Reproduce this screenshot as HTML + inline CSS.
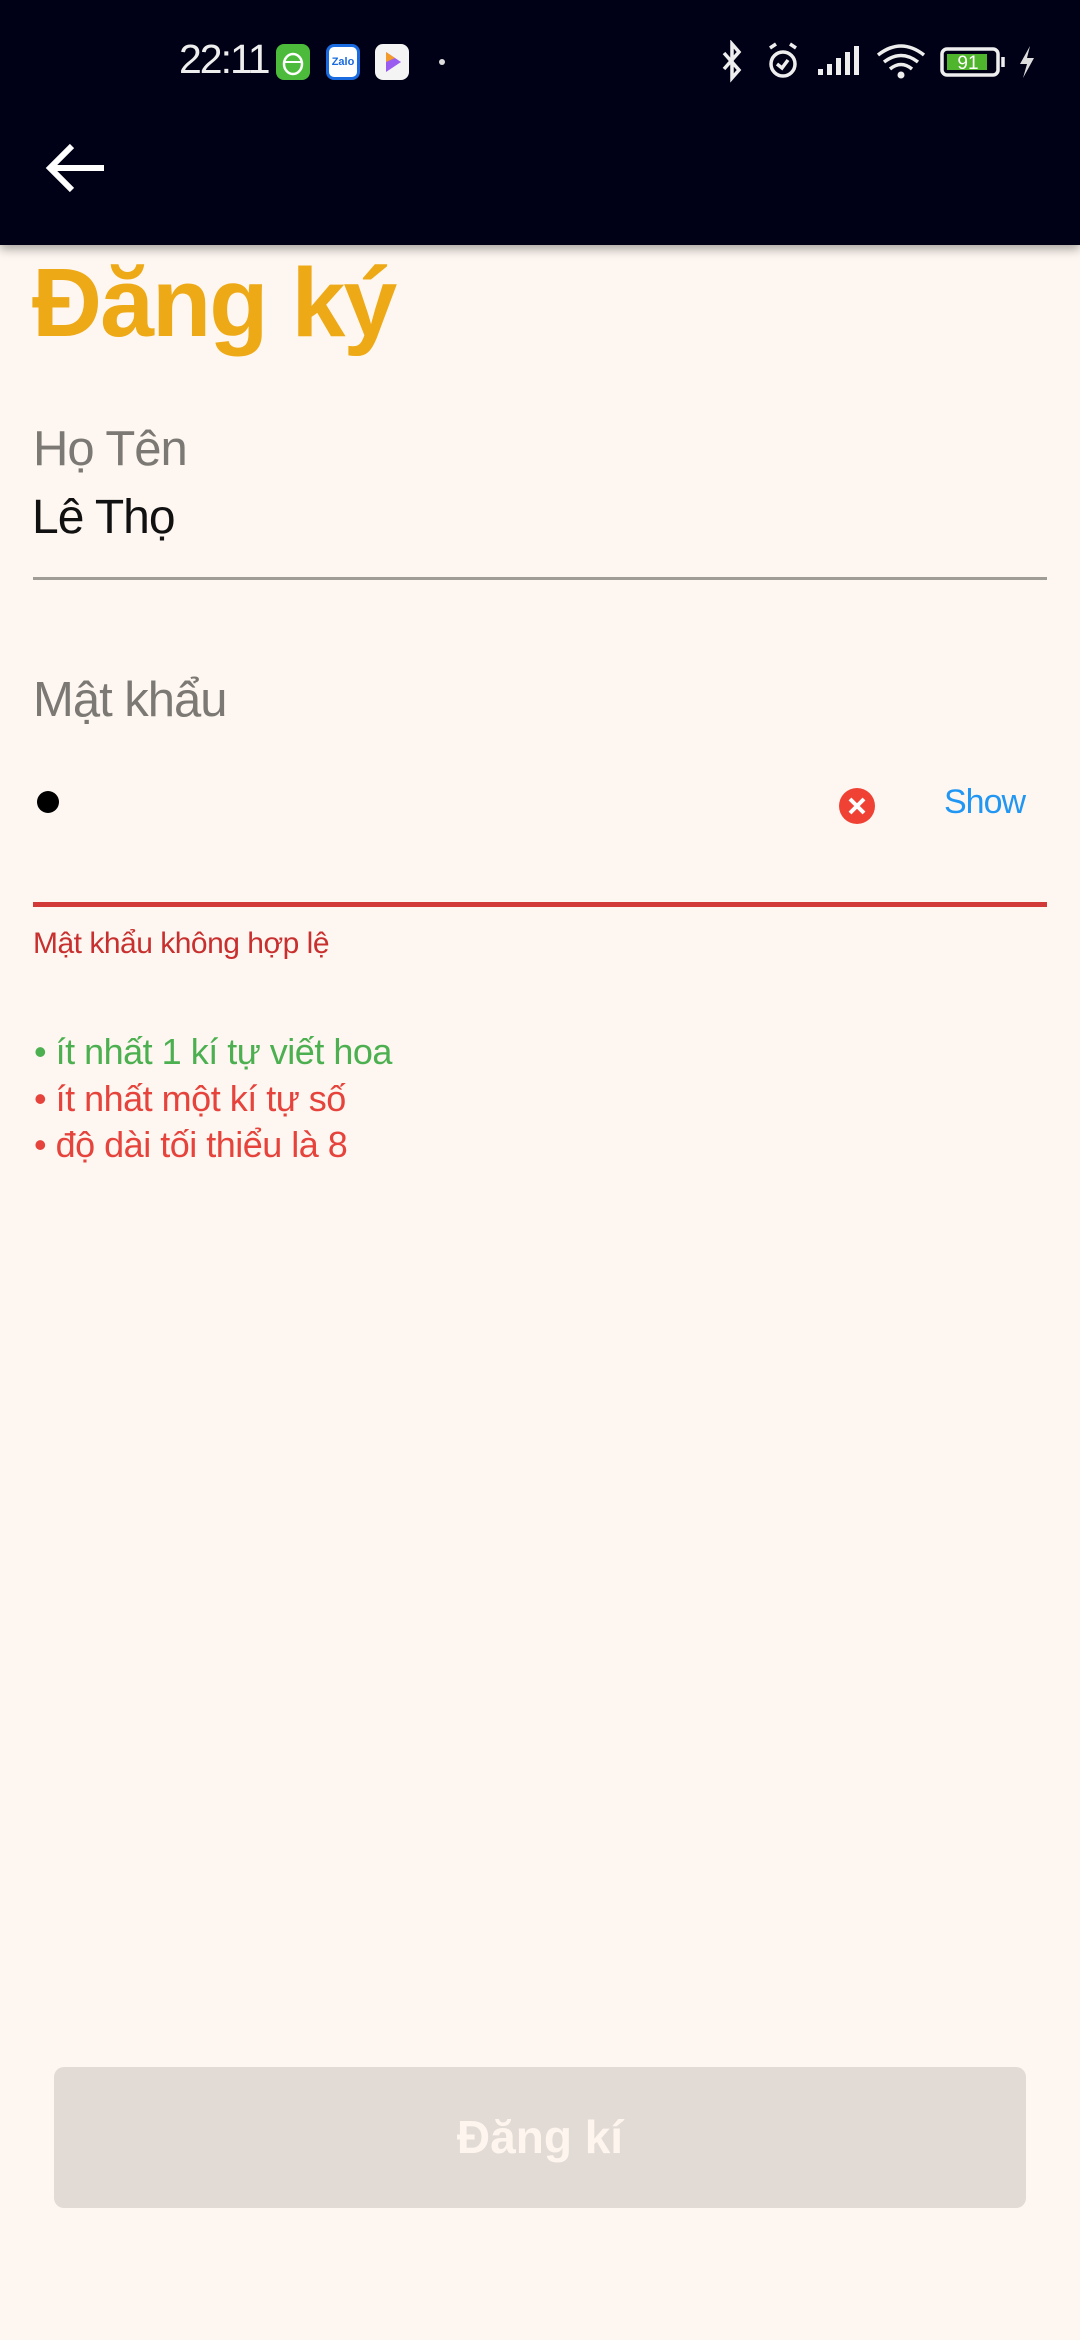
<!DOCTYPE html>
<html><head><meta charset="utf-8">
<style>
*{margin:0;padding:0;box-sizing:border-box}
body{width:1080px;height:2340px;background:#fef7f1;font-family:"Liberation Sans",sans-serif;position:relative;overflow:hidden}
.hdr{position:absolute;left:0;top:0;width:1080px;height:245px;background:#000016;box-shadow:0 4px 10px rgba(0,0,0,0.35)}
.abs{position:absolute;white-space:nowrap}
</style></head><body>
<div class="hdr"></div>
<div class="abs" style="left:179px;top:36px;font-size:41px;color:#eee;letter-spacing:-2px">22:11</div>
<div class="abs" style="left:276px;top:44px;width:34px;height:36px;background:#4cbb3c;border-radius:8px"></div>
<svg class="abs" style="left:276px;top:44px" width="34" height="36"><ellipse cx="17" cy="20" rx="9" ry="10" fill="none" stroke="#fff" stroke-width="2.5"/><path d="M9 18 H25" stroke="#fff" stroke-width="2"/></svg>
<div class="abs" style="left:326px;top:44px;width:34px;height:36px;background:#fff;border-radius:8px;border:3px solid #1a6ae0;font-size:11px;color:#1a6ae0;text-align:center;line-height:30px;font-weight:bold">Zalo</div>
<div class="abs" style="left:375px;top:44px;width:34px;height:36px;background:#f4f4f4;border-radius:8px"></div>
<svg class="abs" style="left:383px;top:50px" width="20" height="24"><path d="M3 2 L18 12 L3 22Z" fill="#9a5cf0"/><path d="M3 2 L12 8 L3 12Z" fill="#f39a2b"/></svg>
<div class="abs" style="left:439px;top:59px;width:6px;height:6px;border-radius:50%;background:#ddd"></div>
<svg class="abs" style="left:712px;top:40px" width="340" height="44">
<g stroke="#eee" stroke-width="3.5" fill="none">
<path d="M12 13 L27 30 L20 38 L20 4 L27 12 L12 29"/>
<circle cx="71" cy="24" r="12"/><path d="M65 24 L70 28 L76 20"/><path d="M58 8 L64 4 M84 8 L78 4"/>
<path d="M166 15 Q189 -3 212 15 M172 22 Q189 9 206 22 M178 29 Q189 20 200 29"/>
<rect x="230" y="9" width="56" height="26" rx="5"/><path d="M291 17 V27"/>
</g>
<circle cx="189" cy="35" r="3.5" fill="#eee"/>
<g fill="#eee">
<rect x="106" y="29" width="5" height="6"/><rect x="115" y="24" width="5" height="11"/><rect x="124" y="18" width="5" height="17"/><rect x="133" y="12" width="5" height="23"/><rect x="142" y="6" width="5" height="29"/></g>
<rect x="235" y="14" width="40" height="16" fill="#4fb52c"/>
<text x="256" y="29" font-size="19" fill="#fff" text-anchor="middle" font-family="Liberation Sans">91</text>
<path d="M318 6 L308 24 L315 24 L311 38 L322 18 L315 18Z" fill="#ddd"/>
</svg>
<svg class="abs" style="left:44px;top:140px" width="66" height="56"><path d="M60 28 H8 M28 6 L6 28 L28 50" stroke="#fff" stroke-width="6" fill="none"/></svg>

<div class="abs" style="left:32px;top:247px;font-size:97px;font-weight:bold;color:#eea916;letter-spacing:-2px">Đăng ký</div>
<div class="abs" style="left:33px;top:421px;font-size:49px;color:#7c7873;letter-spacing:-1px">Họ Tên</div>
<div class="abs" style="left:32px;top:490px;font-size:48px;color:#111;letter-spacing:-1px">Lê Thọ</div>
<div class="abs" style="left:33px;top:577px;width:1014px;height:3px;background:#a09c96"></div>
<div class="abs" style="left:33px;top:672px;font-size:49px;color:#7c7873;letter-spacing:-1px">Mật khẩu</div>
<div class="abs" style="left:37px;top:791px;width:22px;height:22px;border-radius:50%;background:#000"></div>
<svg class="abs" style="left:838px;top:787px" width="38" height="38"><circle cx="19" cy="19" r="18" fill="#f04135"/><path d="M12 12 L26 26 M26 12 L12 26" stroke="#fff" stroke-width="4"/></svg>
<div class="abs" style="left:944px;top:783px;font-size:34px;color:#2196f3;letter-spacing:-1px">Show</div>
<div class="abs" style="left:33px;top:902px;width:1014px;height:5px;background:#d23a3a"></div>
<div class="abs" style="left:33px;top:927px;font-size:30px;color:#c8302f;letter-spacing:-0.5px">Mật khẩu không hợp lệ</div>
<div class="abs" style="left:34px;top:1031px;font-size:36px;color:#4caf50;letter-spacing:-0.5px">• ít nhất 1 kí tự viết hoa</div>
<div class="abs" style="left:34px;top:1078px;font-size:36px;color:#e5433b;letter-spacing:-0.5px">• ít nhất một kí tự số</div>
<div class="abs" style="left:34px;top:1124px;font-size:36px;color:#e5433b;letter-spacing:-0.5px">• độ dài tối thiểu là 8</div>

<div class="abs" style="left:54px;top:2067px;width:972px;height:141px;background:#e2dad5;border-radius:10px;text-align:center;line-height:141px;font-size:46px;font-weight:bold;color:#fdf5ee">Đăng kí</div>
</body></html>
